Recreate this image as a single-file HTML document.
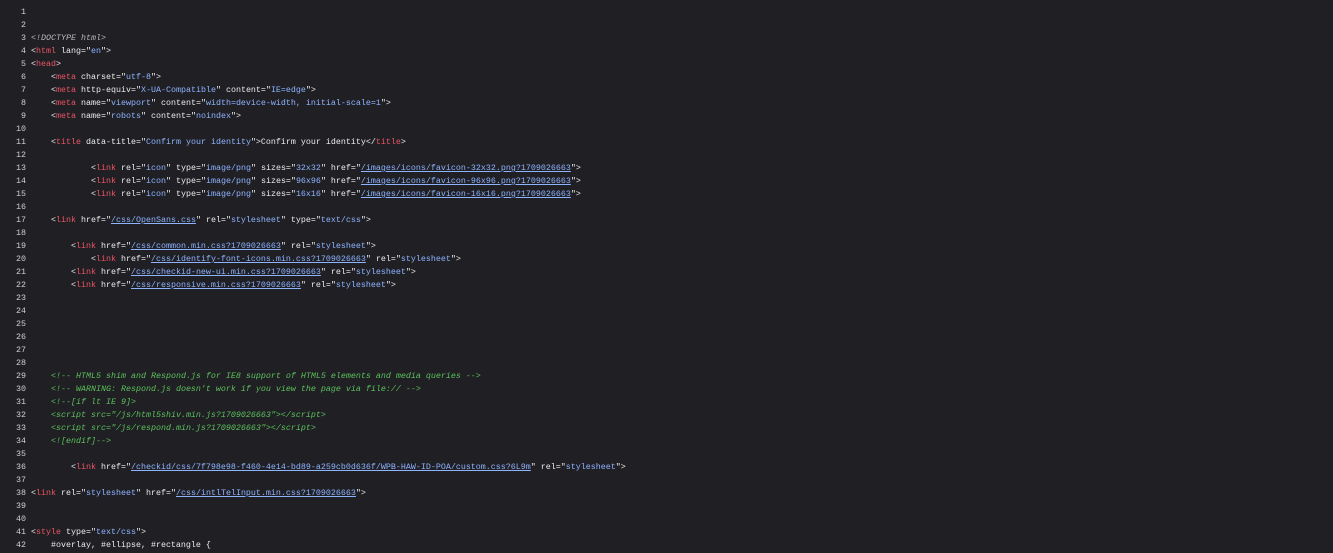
<!DOCTYPE html>
<html><head><meta charset="utf-8"><style>
html,body{margin:0;padding:0;background:#1f1f24;overflow:hidden;width:1333px;height:553px}
.w{position:absolute;top:6px;left:0;font-family:"Liberation Mono",monospace;font-size:8.33px;line-height:13px;color:#ececee}
.n{position:absolute;left:0;width:26px;text-align:right;color:#d0d0d4;white-space:pre;margin:0;font:inherit}
.c{position:absolute;left:31px;white-space:pre;margin:0;font:inherit}
.t{color:#ed5565}.v{color:#8fb4ff}.u{color:#8fb4ff;text-decoration:underline}.g{color:#5cc05c;font-style:italic}.d{color:#b8b8bc;font-style:italic}
</style></head><body><div class="w">
<pre class="n">1
2
3
4
5
6
7
8
9
10
11
12
13
14
15
16
17
18
19
20
21
22
23
24
25
26
27
28
29
30
31
32
33
34
35
36
37
38
39
40
41
42</pre>
<pre class="c"> 
 
<span class="d">&lt;!DOCTYPE html&gt;</span>
&lt;<span class="t">html</span> lang="<span class="v">en</span>"&gt;
&lt;<span class="t">head</span>&gt;
    &lt;<span class="t">meta</span> charset="<span class="v">utf-8</span>"&gt;
    &lt;<span class="t">meta</span> http-equiv="<span class="v">X-UA-Compatible</span>" content="<span class="v">IE=edge</span>"&gt;
    &lt;<span class="t">meta</span> name="<span class="v">viewport</span>" content="<span class="v">width=device-width, initial-scale=1</span>"&gt;
    &lt;<span class="t">meta</span> name="<span class="v">robots</span>" content="<span class="v">noindex</span>"&gt;

    &lt;<span class="t">title</span> data-title="<span class="v">Confirm your identity</span>"&gt;Confirm your identity&lt;/<span class="t">title</span>&gt;

            &lt;<span class="t">link</span> rel="<span class="v">icon</span>" type="<span class="v">image/png</span>" sizes="<span class="v">32x32</span>" href="<span class="u">/images/icons/favicon-32x32.png?1709026663</span>"&gt;
            &lt;<span class="t">link</span> rel="<span class="v">icon</span>" type="<span class="v">image/png</span>" sizes="<span class="v">96x96</span>" href="<span class="u">/images/icons/favicon-96x96.png?1709026663</span>"&gt;
            &lt;<span class="t">link</span> rel="<span class="v">icon</span>" type="<span class="v">image/png</span>" sizes="<span class="v">16x16</span>" href="<span class="u">/images/icons/favicon-16x16.png?1709026663</span>"&gt;

    &lt;<span class="t">link</span> href="<span class="u">/css/OpenSans.css</span>" rel="<span class="v">stylesheet</span>" type="<span class="v">text/css</span>"&gt;

        &lt;<span class="t">link</span> href="<span class="u">/css/common.min.css?1709026663</span>" rel="<span class="v">stylesheet</span>"&gt;
            &lt;<span class="t">link</span> href="<span class="u">/css/identify-font-icons.min.css?1709026663</span>" rel="<span class="v">stylesheet</span>"&gt;
        &lt;<span class="t">link</span> href="<span class="u">/css/checkid-new-ui.min.css?1709026663</span>" rel="<span class="v">stylesheet</span>"&gt;
        &lt;<span class="t">link</span> href="<span class="u">/css/responsive.min.css?1709026663</span>" rel="<span class="v">stylesheet</span>"&gt;






    <span class="g">&lt;!-- HTML5 shim and Respond.js for IE8 support of HTML5 elements and media queries --&gt;</span>
    <span class="g">&lt;!-- WARNING: Respond.js doesn't work if you view the page via file:// --&gt;</span>
    <span class="g">&lt;!--[if lt IE 9]&gt;</span>
    <span class="g">&lt;script src="/js/html5shiv.min.js?1709026663"&gt;&lt;/script&gt;</span>
    <span class="g">&lt;script src="/js/respond.min.js?1709026663"&gt;&lt;/script&gt;</span>
    <span class="g">&lt;![endif]--&gt;</span>

        &lt;<span class="t">link</span> href="<span class="u">/checkid/css/7f798e98-f460-4e14-bd89-a259cb0d636f/WPB-HAW-ID-POA/custom.css?6L9m</span>" rel="<span class="v">stylesheet</span>"&gt;

&lt;<span class="t">link</span> rel="<span class="v">stylesheet</span>" href="<span class="u">/css/intlTelInput.min.css?1709026663</span>"&gt;


&lt;<span class="t">style</span> type="<span class="v">text/css</span>"&gt;
    #overlay, #ellipse, #rectangle {</pre>
</div></body></html>
